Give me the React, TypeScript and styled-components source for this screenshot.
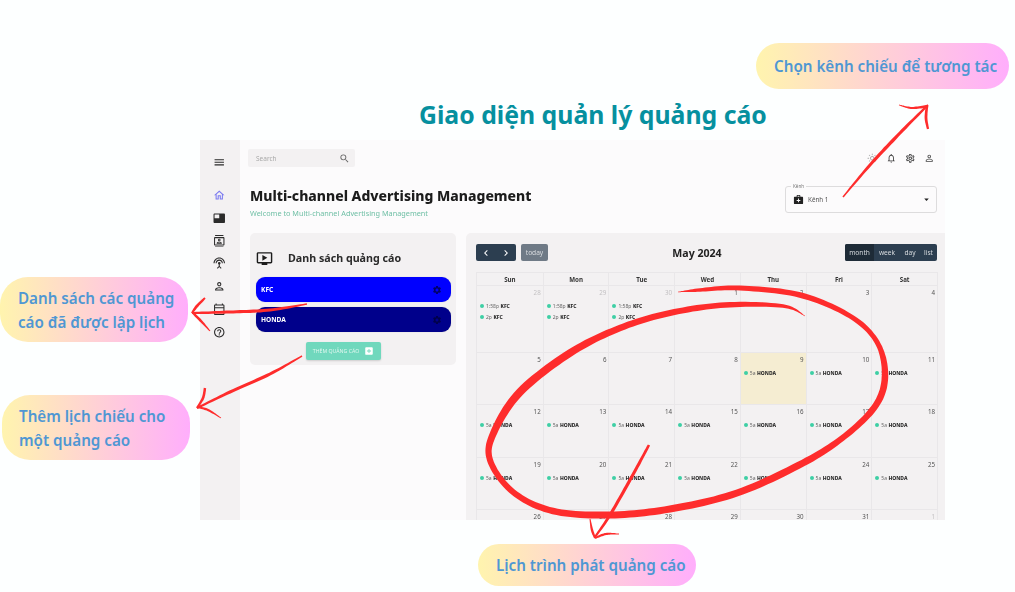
import React from "react";
import styled, { createGlobalStyle } from "styled-components";
import {
  MdMenu, MdOutlineHome, MdFeaturedVideo, MdOutlineContacts, MdOutlineSettingsInputAntenna,
  MdOutlinePerson, MdOutlineCalendarToday, MdOutlineHelpOutline, MdSearch, MdOutlineLightMode,
  MdOutlineNotifications, MdOutlineSettings, MdOutlinePersonOutline, MdMedicalServices,
  MdArrowDropDown, MdOutlineOndemandVideo, MdSettings, MdAddBox, MdChevronLeft, MdChevronRight,
} from "react-icons/md";

const Global = createGlobalStyle`
  html, body { margin: 0; padding: 0; background: #fdffff; }
  * { box-sizing: border-box; }
  body { font-family: "Noto Sans", "Open Sans", sans-serif; }
`;

const Canvas = styled.div`
  position: relative;
  width: 1015px;
  height: 592px;
  overflow: hidden;
  background: #fdffff;
`;

const Heading = styled.h1`
  position: absolute;
  left: 419px;
  top: 96px;
  margin: 0;
  font-size: 24.8px;
  line-height: 36px;
  font-weight: 700;
  color: #06909f;
  white-space: nowrap;
`;

const Callout = styled.div<{ $x: number; $y: number; $w: number; $h: number; $pad: number }>`
  position: absolute;
  left: ${(p) => p.$x}px;
  top: ${(p) => p.$y}px;
  width: ${(p) => p.$w}px;
  height: ${(p) => p.$h}px;
  padding-left: ${(p) => p.$pad}px;
  display: flex;
  align-items: center;
  border-radius: 28px;
  background: linear-gradient(90deg, #fff4ae 0%, #ffaefc 100%);
  color: #4f97d3;
  font-size: 15.2px;
  line-height: 24px;
  font-weight: 600;
  white-space: pre-line;
`;

const Shot = styled.div`
  position: absolute;
  left: 200px;
  top: 140px;
  width: 745px;
  height: 380px;
  overflow: hidden;
  display: flex;
  background: #fcfbfc;
  color: #222;
  filter: blur(0.35px);
`;

const Sidebar = styled.nav`
  width: 40px;
  flex: none;
  background: #f3f1f2;
  display: flex;
  flex-direction: column;
  align-items: center;
  padding: 16px 2px 0 0;
  color: #2b2b2b;
`;

const SideIcon = styled.span<{ $gap?: number; $color?: string }>`
  display: flex;
  align-items: center;
  justify-content: center;
  height: 12px;
  margin-bottom: ${(p) => p.$gap ?? 10.9}px;
  color: ${(p) => p.$color ?? "inherit"};
  font-size: 12.5px;
`;

const Main = styled.main`
  flex: 1;
  min-width: 0;
  padding: 9px 0 0 8px;
  display: flex;
  flex-direction: column;
`;

const TopBar = styled.div`
  display: flex;
  justify-content: space-between;
  align-items: center;
  height: 18px;
  padding-right: 11px;
`;

const Search = styled.div`
  width: 107px;
  height: 18px;
  background: #f3f1f2;
  border-radius: 2px;
  padding: 0 5px 0 8px;
  display: flex;
  align-items: center;
  justify-content: space-between;
  font-size: 6.5px;
  color: #a9a9a9;
  svg { font-size: 11px; color: #666; }
`;

const TopIcons = styled.div`
  display: flex;
  gap: 8.5px;
  font-size: 10.5px;
  color: #444;
  svg { display: block; }
  svg:first-child { color: #a8a8a8; }
`;

const Header = styled.header`
  display: flex;
  justify-content: space-between;
  align-items: flex-start;
  margin-top: 19px;
  padding: 0 8px 0 2px;
`;

const TitleBlock = styled.div`
  display: flex;
  flex-direction: column;
`;

const PageTitle = styled.div`
  font-size: 13.95px;
  line-height: 20px;
  font-weight: 800;
  color: #1c1c1c;
  white-space: nowrap;
`;

const PageSub = styled.div`
  font-size: 7.3px;
  line-height: 10px;
  margin-top: 2px;
  color: #6fbfa5;
  white-space: nowrap;
`;

const Select = styled.div`
  position: relative;
  width: 152px;
  height: 27px;
  border: 1px solid #dddcdd;
  border-radius: 3px;
  display: flex;
  align-items: center;
  padding: 0 4px 0 7px;
  font-size: 6.3px;
  color: #555;
`;

const SelectLabel = styled.span`
  position: absolute;
  left: 5px;
  top: -4px;
  padding: 0 2px;
  background: #fcfbfc;
  font-size: 4.6px;
  line-height: 6px;
  color: #777;
`;

const SelectValue = styled.span`
  flex: 1;
  margin-left: 4px;
`;

const SelectIcon = styled.span`
  display: flex;
  font-size: 11px;
  color: #222;
`;

const Content = styled.div`
  display: flex;
  gap: 10px;
  margin-top: 15px;
  padding-left: 2px;
  flex: 1;
  min-height: 0;
`;

const ListPanel = styled.section`
  width: 206px;
  height: 132px;
  flex: none;
  background: #f3f1f2;
  border-radius: 5px;
  padding: 15px 5px 0 6px;
  display: flex;
  flex-direction: column;
  align-items: stretch;
`;

const ListHead = styled.div`
  display: flex;
  align-items: center;
  height: 20px;
  margin-bottom: 9px;
  svg { font-size: 17px; color: #1c1c1c; margin-right: 15px; }
`;

const ListTitle = styled.div`
  font-size: 10.7px;
  font-weight: 700;
  color: #2a2a2a;
  white-space: nowrap;
`;

const AdBar = styled.div<{ $bg: string }>`
  height: 25px;
  margin-bottom: 5px;
  border-radius: 9px;
  background: ${(p) => p.$bg};
  color: #fff;
  display: flex;
  align-items: center;
  justify-content: space-between;
  padding: 0 9px 0 5px;
  font-size: 6.6px;
  font-weight: 700;
  box-shadow: 0 0 1px rgba(0, 0, 0, 0.25);
  svg { font-size: 10px; color: rgba(0, 0, 50, 0.72); }
`;

const AddButton = styled.button`
  align-self: flex-start;
  margin: 5px 0 0 50px;
  width: 75px;
  height: 18px;
  border: none;
  border-radius: 2px;
  background: #70d8bd;
  color: #dff6ef;
  font-family: inherit;
  font-size: 5.2px;
  display: flex;
  align-items: center;
  justify-content: center;
  gap: 5px;
  padding: 0;
  box-shadow: 0 1px 2px rgba(0, 0, 0, 0.15);
  svg { font-size: 10px; color: #fff; }
`;

const CalendarPanel = styled.section`
  flex: 1;
  min-width: 0;
  background: #f3f1f2;
  border-radius: 5px 0 0 0;
  padding: 11px 8px 0 10px;
  display: flex;
  flex-direction: column;
`;

const CalToolbar = styled.div`
  display: grid;
  grid-template-columns: 1fr auto 1fr;
  align-items: center;
  height: 17px;
  margin-bottom: 11px;
`;

const ToolLeft = styled.div`
  display: flex;
  gap: 5px;
`;

const NavGroup = styled.div`
  display: flex;
  width: 40px;
  height: 17px;
  background: #2c3e50;
  border-radius: 2px;
  color: #fff;
  align-items: center;
  justify-content: space-around;
  font-size: 12px;
`;

const TodayBtn = styled.div`
  width: 27px;
  height: 17px;
  border-radius: 2px;
  background: #6f7a86;
  color: #d8dbdf;
  font-size: 6.6px;
  display: flex;
  align-items: center;
  justify-content: center;
`;

const CalTitle = styled.div`
  font-size: 10.6px;
  font-weight: 700;
  color: #222;
  padding-right: 19px;
`;

const ViewGroup = styled.div`
  justify-self: end;
  display: flex;
  height: 17px;
  border-radius: 2px;
  overflow: hidden;
  background: #2c3e50;
`;

const ViewBtn = styled.div<{ $active?: boolean; $w: number }>`
  width: ${(p) => p.$w}px;
  background: ${(p) => (p.$active ? "#1e2b37" : "transparent")};
  color: #d5d9dd;
  font-size: 6.6px;
  display: flex;
  align-items: center;
  justify-content: center;
`;

const Grid = styled.div`
  display: grid;
  grid-template-columns: repeat(7, 1fr);
  grid-template-rows: 13px 67px 52px 53px 52px 40px;
  border: 1px solid #e9e7e9;
  border-width: 1px 1px 0 1px;
  margin-right: -1px;
`;

const DayName = styled.div`
  border-left: 1px solid #e9e7e9;
  border-bottom: 1px solid #e9e7e9;
  font-size: 6.2px;
  font-weight: 700;
  color: #333;
  display: flex;
  align-items: center;
  justify-content: center;
  &:first-child { border-left: none; }
`;

const Cell = styled.div<{ $today?: boolean; $first?: boolean }>`
  border-left: ${(p) => (p.$first ? "none" : "1px solid #e9e7e9")};
  border-bottom: 1px solid #e9e7e9;
  background: ${(p) => (p.$today ? "#f5edd2" : "transparent")};
  padding: 3px 2px 0 3px;
  display: flex;
  flex-direction: column;
  min-width: 0;
  overflow: hidden;
`;

const CellNum = styled.div<{ $muted?: boolean }>`
  text-align: right;
  font-size: 6.2px;
  line-height: 8px;
  height: 8px;
  margin-bottom: 3px;
  color: ${(p) => (p.$muted ? "#c3c1c3" : "#555")};
`;

const Event = styled.div`
  display: flex;
  align-items: center;
  height: 11px;
  font-size: 5px;
  color: #666;
  white-space: nowrap;
  b { color: #2a2a2a; margin-left: 1.5px; font-weight: 800; }
`;

const Dot = styled.span`
  width: 4px;
  height: 4px;
  border-radius: 50%;
  background: #3ecfa5;
  margin-right: 2px;
  flex: none;
`;

const Ink = styled.svg`
  position: absolute;
  left: 0;
  top: 0;
  pointer-events: none;
`;

type P = [number, number, number];

function brush(pts: P[]): string {
  const s: P[] = [];
  const at = (i: number) => pts[Math.max(0, Math.min(pts.length - 1, i))];
  for (let i = 0; i < pts.length - 1; i++) {
    const [a, b, c, d] = [at(i - 1), at(i), at(i + 1), at(i + 2)];
    for (let k = 0; k < 12; k++) {
      const t = k / 12;
      const f = (j: number) =>
        0.5 * (2 * b[j] + (c[j] - a[j]) * t + (2 * a[j] - 5 * b[j] + 4 * c[j] - d[j]) * t * t + (3 * b[j] - a[j] - 3 * c[j] + d[j]) * t * t * t);
      s.push([f(0), f(1), f(2)]);
    }
  }
  s.push(pts[pts.length - 1]);
  const left: string[] = [];
  const right: string[] = [];
  s.forEach((p, i) => {
    const q = s[Math.min(i + 1, s.length - 1)];
    const r = s[Math.max(i - 1, 0)];
    const dx = q[0] - r[0];
    const dy = q[1] - r[1];
    const l = Math.hypot(dx, dy) || 1;
    const w = Math.max(p[2], 0.2) / 2;
    left.push(`${(p[0] - (dy / l) * w).toFixed(1)} ${(p[1] + (dx / l) * w).toFixed(1)}`);
    right.unshift(`${(p[0] + (dy / l) * w).toFixed(1)} ${(p[1] - (dx / l) * w).toFixed(1)}`);
  });
  return `M${left.join("L")}L${right.join("L")}Z`;
}

const strokes: P[][] = [
  // ellipse
  [[678, 292, 0.4], [700, 290, 3.5], [740, 288, 5], [800, 295, 5.5], [850, 316, 5], [877, 342, 5], [885, 375, 6.5],
   [876, 405, 6.5], [845, 436, 6], [803, 463, 7], [737, 493, 7], [670, 509, 7], [610, 515, 7], [553, 511, 6.5], [513, 492, 6], [490, 460, 6],
   [494, 432, 7], [520, 392, 8], [570, 353, 7.5], [620, 328, 6.5], [670, 313, 6], [725, 305, 5.5], [783, 306, 3.5], [805, 316, 0.4]],
  // top right arrow
  [[843, 197, 1.5], [870, 165, 3], [900, 133, 3.2], [928, 105, 2]],
  [[899, 105, 0.8], [912, 108, 2.2], [928, 106, 2.5]],
  [[927, 106, 2.5], [926, 118, 2.8], [928, 129, 2.2]],
  // list arrow
  [[307, 304, 1.5], [270, 310, 3], [230, 312, 3], [192, 313, 2]],
  [[205, 298, 2], [197, 306, 2.8], [192, 313, 2]],
  [[192, 312, 2], [200, 320, 2.6], [210, 331, 1]],
  // add arrow
  [[302, 356, 1.5], [270, 374, 3], [230, 392, 3], [197, 408, 2]],
  [[205, 388, 2.4], [203, 398, 2.6], [197, 408, 2]],
  [[197, 407, 2], [208, 410, 2.2], [221, 418, 0.8]],
  // schedule arrow
  [[649, 445, 2.6], [630, 480, 3.2], [610, 515, 3], [595, 537, 2]],
  [[590, 519, 1], [592, 530, 2.4], [595, 538, 2]],
  [[595, 538, 2], [606, 534, 2.2], [619, 534, 0.8]],
];

const dayNames = ["Sun", "Mon", "Tue", "Wed", "Thu", "Fri", "Sat"];
const days = [
  28, 29, 30, 1, 2, 3, 4,
  5, 6, 7, 8, 9, 10, 11,
  12, 13, 14, 15, 16, 17, 18,
  19, 20, 21, 22, 23, 24, 25,
  26, 27, 28, 29, 30, 31, 1,
];

function eventsFor(i: number): [string, string][] {
  if (i < 3) return [["1:58p", "KFC"], ["2p", "KFC"]];
  if (i >= 11 && i < 28) return [["5a", "HONDA"]];
  return [];
}

const topIcons = [MdOutlineLightMode, MdOutlineNotifications, MdOutlineSettings, MdOutlinePersonOutline];

export default function App() {
  return (
    <Canvas>
      <Global />
      <Heading>Giao diện quản lý quảng cáo</Heading>
      <Shot>
        <Sidebar>
          <SideIcon $gap={21}><MdMenu /></SideIcon>
          <SideIcon $color="#7a7af0"><MdOutlineHome /></SideIcon>
          <SideIcon><MdFeaturedVideo /></SideIcon>
          <SideIcon><MdOutlineContacts /></SideIcon>
          <SideIcon><MdOutlineSettingsInputAntenna /></SideIcon>
          <SideIcon><MdOutlinePerson /></SideIcon>
          <SideIcon><MdOutlineCalendarToday /></SideIcon>
          <SideIcon><MdOutlineHelpOutline /></SideIcon>
        </Sidebar>
        <Main>
          <TopBar>
            <Search>Search<MdSearch /></Search>
            <TopIcons>
              {topIcons.map((Icon, i) => <Icon key={i} />)}
            </TopIcons>
          </TopBar>
          <Header>
            <TitleBlock>
              <PageTitle>Multi-channel Advertising Management</PageTitle>
              <PageSub>Welcome to Multi-channel Advertising Management</PageSub>
            </TitleBlock>
            <Select>
              <SelectLabel>Kênh</SelectLabel>
              <SelectIcon><MdMedicalServices /></SelectIcon>
              <SelectValue>Kênh 1</SelectValue>
              <SelectIcon><MdArrowDropDown /></SelectIcon>
            </Select>
          </Header>
          <Content>
            <ListPanel>
              <ListHead>
                <MdOutlineOndemandVideo />
                <ListTitle>Danh sách quảng cáo</ListTitle>
              </ListHead>
              <AdBar $bg="#0000ff">KFC<MdSettings /></AdBar>
              <AdBar $bg="#00008b">HONDA<MdSettings /></AdBar>
              <AddButton>THÊM QUẢNG CÁO<MdAddBox /></AddButton>
            </ListPanel>
            <CalendarPanel>
              <CalToolbar>
                <ToolLeft>
                  <NavGroup><MdChevronLeft /><MdChevronRight /></NavGroup>
                  <TodayBtn>today</TodayBtn>
                </ToolLeft>
                <CalTitle>May 2024</CalTitle>
                <ViewGroup>
                  <ViewBtn $active $w={29}>month</ViewBtn>
                  <ViewBtn $w={26}>week</ViewBtn>
                  <ViewBtn $w={20}>day</ViewBtn>
                  <ViewBtn $w={17}>list</ViewBtn>
                </ViewGroup>
              </CalToolbar>
              <Grid>
                {dayNames.map((d) => <DayName key={d}>{d}</DayName>)}
                {days.map((d, i) => (
                  <Cell key={i} $today={i === 11} $first={i % 7 === 0}>
                    <CellNum $muted={i < 3 || i === 34}>{d}</CellNum>
                    {eventsFor(i).map(([t, n], k) => (
                      <Event key={k}><Dot />{t}<b>{n}</b></Event>
                    ))}
                  </Cell>
                ))}
              </Grid>
            </CalendarPanel>
          </Content>
        </Main>
      </Shot>
      <Callout $x={756} $y={43} $w={253} $h={46} $pad={18}>Chọn kênh chiếu để tương tác</Callout>
      <Callout $x={0} $y={277} $w={188} $h={65} $pad={18}>{"Danh sách các quảng\ncáo đã được lập lịch"}</Callout>
      <Callout $x={2} $y={395} $w={188} $h={65} $pad={17}>{"Thêm lịch chiếu cho\nmột quảng cáo"}</Callout>
      <Callout $x={478} $y={544} $w={218} $h={42} $pad={18}>Lịch trình phát quảng cáo</Callout>
      <Ink width={1015} height={592} viewBox="0 0 1015 592">
        {strokes.map((s, i) => <path key={i} d={brush(s)} fill="#fe2c2c" />)}
      </Ink>
    </Canvas>
  );
}
